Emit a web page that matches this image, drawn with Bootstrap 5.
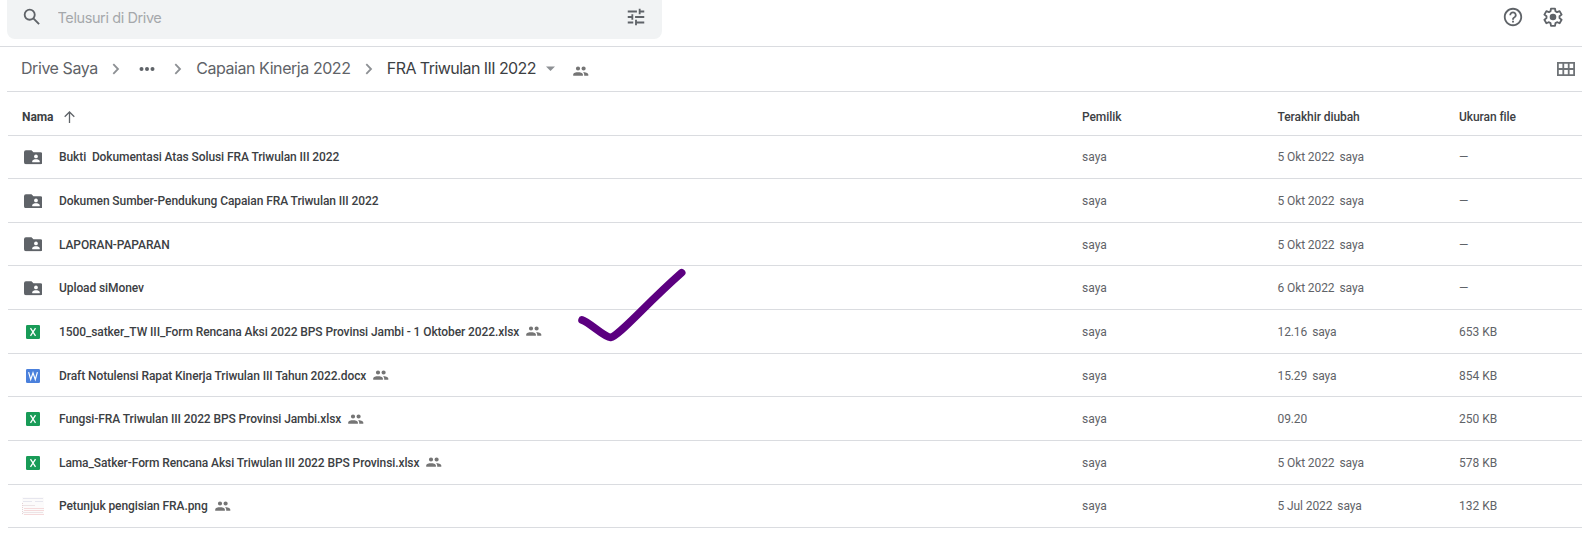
<!DOCTYPE html>
<html lang="id">
<head>
<meta charset="utf-8">
<meta name="viewport" content="width=device-width, initial-scale=1">
<title>FRA Triwulan III 2022 - Drive</title>
<link href="https://cdn.jsdelivr.net/npm/bootstrap@5.3.0/dist/css/bootstrap.min.css" rel="stylesheet">
<style>
body{font-family:Roboto,"Liberation Sans",sans-serif;color:#3c4043;font-size:12px;line-height:16px;height:556px;overflow:hidden;background:#fff}
svg{display:block;flex:none}
.topbar{height:47px;border-bottom:1px solid #dadce0;color:#5f6368}
.searchbox{width:655px;height:39px;margin-left:6.5px;background:#f1f3f4;border-radius:0 0 8px 8px;padding:0 14.5px 5px 14px}
.searchbox input{all:unset;font-family:Inter,Roboto,sans-serif;font-size:14.5px;letter-spacing:-.4px;color:#5f6368;flex:1;margin-left:15px;padding-top:2px}
.searchbox input::placeholder{color:#a5a8ab;opacity:1}
.topicons{padding:0 17px 13px 0}
.crumbs{height:45px;margin-left:7px;border-bottom:1px solid #dadce0;font-family:Inter,Roboto,sans-serif;font-size:16px;letter-spacing:-.44px;color:#5f6368;padding-left:14px;padding-bottom:1px}
.crumbs span{margin-top:-1px}
.crumbs .now{color:#3c4043;letter-spacing:-.56px}
.files{margin-left:8px;margin-top:-.45px}
.file{height:43.63px;border-bottom:1px solid #dadce0;color:#5f6368;white-space:pre;padding-top:1.1px}
.head{height:44px;font-weight:500;color:#3c4043;padding-top:7.4px;letter-spacing:-.07px}
.c-name{width:1074px;padding-left:14px}
.c-own{width:195.500px}.c-date{width:181.500px}
.c-date span{letter-spacing:-.1px}
.title{color:#3c4043;font-weight:500;letter-spacing:-.093px}
.ico{width:22px;margin-right:15px}
.tick{position:absolute;left:576px;top:266px}
.people{margin-left:7px;color:#757575}
</style>
</head>
<body>
<svg class="d-none">
<symbol id="people" viewBox="0 0 16 11"><path fill="currentColor" d="M5 4.600a2.100 2.100 0 1 0 0-4.200a2.100 2.100 0 0 0 0 4.200zM10.600 4.600a2.100 2.100 0 1 0 0-4.200a2.100 2.100 0 0 0 0 4.200zM.2 9.800V8.500C.2 6.800 3 6.200 5 6.200s4.900.6 4.900 2.300V9.800zM11.200 9.800V8.400c0-.9-.5-1.600-1.200-2.200c2 0 5.300.6 5.300 2.300V9.800z"/></symbol>
<symbol id="folder" viewBox="0 0 19 15"><path fill="#5f6368" d="M2 .3h5.700l2 2H17a2 2 0 0 1 2 2V12.600a2 2 0 0 1-2 2H2a2 2 0 0 1-2-2V2.300a2 2 0 0 1 2-2z"/><circle cx="12.300" cy="6.600" r="1.900" fill="#fff"/><path fill="#fff" d="M8.500 12.500v-1c0-1.400 2.300-2 3.800-2s3.800.6 3.800 2v1z"/></symbol>
<symbol id="xls" viewBox="0 0 14 14"><rect width="14" height="14" rx="1.300" fill="#189b57"/><path d="M4.500 3.200l5 7.600M9.500 3.200l-5 7.600" stroke="#fff" stroke-width="1.300" fill="none"/></symbol>
<symbol id="doc" viewBox="0 0 14 14"><rect width="14" height="14" rx="1.300" fill="#4a80dc"/><path d="M2.600 3.200L4.700 10.600L7 3.800L9.300 10.600L11.400 3.200" stroke="#fff" stroke-width="1.200" fill="none"/></symbol>
<symbol id="thumb" viewBox="0 0 22 18"><rect width="22" height="18" fill="#fcfbfb"/><path d="M1 1.500h20M1 4.500h9M13 4.500h8" stroke="#e6e6ee"/><path d="M1 8.500h12M1 15.500h20" stroke="#ece4e6"/><path d="M2 11.500h20M2 13.500h20M2 17.500h20" stroke="#f5dadb"/><path d="M.5 6v12" stroke="#e5d2d5" stroke-dasharray="1 1"/></symbol>
<symbol id="chev" viewBox="0 0 8 12"><path d="M1.300 1.200L6 6L1.300 10.800" fill="none" stroke="#8d9094" stroke-width="1.800"/></symbol>
</svg>

<header class="topbar d-flex justify-content-between">
  <div class="searchbox d-flex align-items-center">
    <svg width="22" height="22" viewBox="0 0 24 24" fill="#5f6368"><path d="M20.490 19l-5.730-5.730C15.530 12.200 16 10.910 16 9.500A6.500 6.500 0 1 0 9.500 16c1.410 0 2.700-.47 3.770-1.240L19 20.490 20.490 19zM5 9.500C5 7.010 7.010 5 9.500 5S14 7.010 14 9.500 11.990 14 9.500 14 5 11.990 5 9.500z"/></svg>
    <input type="text" placeholder="Telusuri di Drive" aria-label="Telusuri di Drive">
    <svg width="22" height="22" viewBox="0 0 24 24" fill="#5f6368"><path d="M3 17v2h6v-2H3zM3 5v2h10V5H3zm10 16v-2h8v-2h-8v-2h-2v6h2zM7 9v2H3v2h4v2h2V9H7zm14 4v-2H11v2h10zm-6-4h2V7h4V5h-4V3h-2v6z"/></svg>
  </div>
  <div class="topicons d-flex align-items-center">
    <svg width="22" height="22" viewBox="0 0 24 24" fill="#5f6368"><path d="M11 18h2v-2h-2v2zm1-16C6.480 2 2 6.480 2 12s4.480 10 10 10 10-4.480 10-10S17.520 2 12 2zm0 18c-4.410 0-8-3.590-8-8s3.590-8 8-8 8 3.590 8 8-3.590 8-8 8zm0-14c-2.210 0-4 1.790-4 4h2c0-1.100.9-2 2-2s2 .9 2 2c0 2-3 1.750-3 5h2c0-2.250 3-2.500 3-5 0-2.210-1.790-4-4-4z"/></svg>
    <svg style="margin-left:17px" width="24" height="22" viewBox="0 0 24 24" fill="none" stroke="#5f6368" stroke-width="2" stroke-linejoin="round"><path d="M9.800 2.800h4.400l.5 2.900l1.700 1l2.800-1.100l2.200 3.800l-2.300 1.800v2l2.300 1.800l-2.200 3.800l-2.800-1.100l-1.700 1l-.5 2.900H9.800l-.5-2.900l-1.700-1l-2.800 1.100L2.600 15l2.300-1.800v-2L2.600 9.400l2.200-3.800l2.800 1.100l1.700-1z"/><circle cx="12" cy="12" r="3.600" fill="#5f6368" stroke="none"/></svg>
  </div>
</header>

<nav class="crumbs d-flex align-items-center">
  <span>Drive Saya</span>
  <svg style="margin-left:14.500px" width="8" height="12"><use href="#chev"/></svg>
  <svg style="margin-left:19px" width="16" height="6" fill="#5f6368"><circle cx="2.500" cy="3" r="2"/><circle cx="8" cy="3" r="2"/><circle cx="13.500" cy="3" r="2"/></svg>
  <svg style="margin-left:19px" width="8" height="12"><use href="#chev"/></svg>
  <span style="margin-left:14px">Capaian Kinerja 2022</span>
  <svg style="margin-left:14.500px" width="8" height="12"><use href="#chev"/></svg>
  <span class="now" style="margin-left:13.800px">FRA Triwulan III 2022</span>
  <svg style="margin-left:9.500px" width="10" height="6" fill="#8d9094"><path d="M0 .5h9L4.500 5z"/></svg>
  <svg style="margin-left:17px;margin-top:5px;color:#757575" width="16" height="11"><use href="#people"/></svg>
  <svg class="ms-auto" style="margin-right:7px" width="18" height="14" fill="none" stroke="#6f7377" stroke-width="1.800"><path d="M.9.9h16.200v12.200H.9zM.9 7h16.200M6.300.9v12.200M11.700.9v12.200"/></svg>
</nav>

<main class="files" id="files">
  <div class="file head d-flex align-items-center"><div class="c-name d-flex align-items-center"><span class="fw-bold">Nama</span><svg style="margin-left:10.500px" width="11" height="12" fill="none" stroke="#5f6368" stroke-width="1.300"><path d="M5.500 12V1M.7 5.800L5.500 1l4.800 4.800"/></svg></div><div class="c-own">Pemilik</div><div class="c-date">Terakhir diubah</div><div>Ukuran file</div></div>
</main>
<svg class="tick" width="112" height="78" fill="none" stroke="#5c0080" stroke-width="7.600" stroke-linecap="round" stroke-linejoin="round"><path d="M6 54C13 56 28 71 34.500 71.500C43 70 68 40 105.700 6.700"/></svg>

<script>
const rows=[
["folder","Bukti  Dokumentasi Atas Solusi FRA Triwulan III 2022","5 Okt 2022","saya","—"],
["folder","Dokumen Sumber-Pendukung Capaian FRA Triwulan III 2022","5 Okt 2022","saya","—"],
["folder","LAPORAN-PAPARAN","5 Okt 2022","saya","—"],
["folder","Upload siMonev","6 Okt 2022","saya","—"],
["xls","1500_satker_TW III_Form Rencana Aksi 2022 BPS Provinsi Jambi - 1 Oktober 2022.xlsx","12.16","saya","653 KB"],
["doc","Draft Notulensi Rapat Kinerja Triwulan III Tahun 2022.docx","15.29","saya","854 KB"],
["xls","Fungsi-FRA Triwulan III 2022 BPS Provinsi Jambi.xlsx","09.20","","250 KB"],
["xls","Lama_Satker-Form Rencana Aksi Triwulan III 2022 BPS Provinsi.xlsx","5 Okt 2022","saya","578 KB"],
["thumb","Petunjuk pengisian FRA.png","5 Jul 2022","saya","132 KB"]];
const size={folder:[18.5,14.6],xls:[14,14],doc:[14,14],thumb:[22,18]};
document.getElementById("files").insertAdjacentHTML("beforeend",rows.map(([k,n,d,w,s])=>`<div class="file d-flex align-items-center"><div class="c-name d-flex align-items-center"><div class="ico d-flex justify-content-center"><svg width="${size[k][0]}" height="${size[k][1]}"><use href="#${k}"/></svg></div><span class="title">${n}</span>${k=="folder"?"":'<svg class="people" width="16" height="11"><use href="#people"/></svg>'}</div><div class="c-own">saya</div><div class="c-date"><span>${d}</span><span style="margin-left:5px">${w}</span></div><div>${s}</div></div>`).join(""));
</script>
<script src="https://cdn.jsdelivr.net/npm/bootstrap@5.3.0/dist/js/bootstrap.bundle.min.js"></script>
</body>
</html>
